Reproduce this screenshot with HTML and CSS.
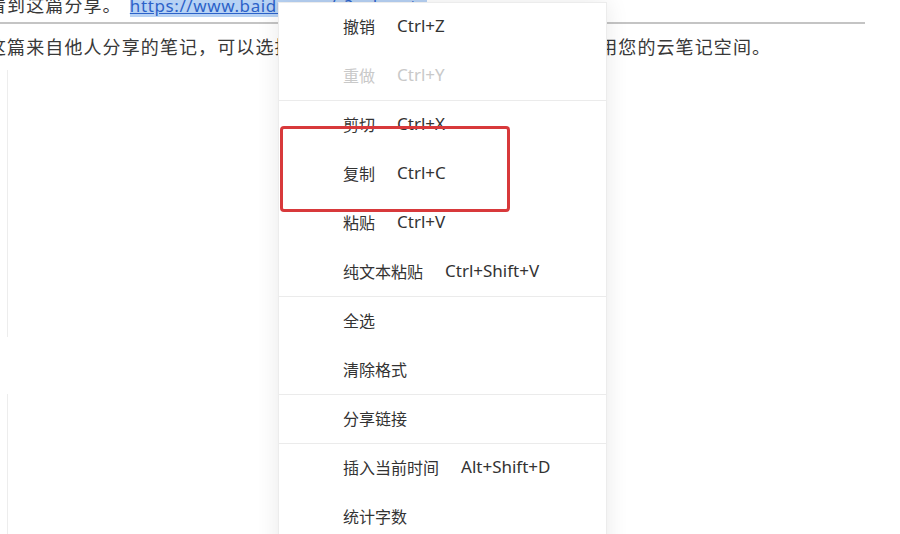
FILE: index.html
```html
<!DOCTYPE html>
<html lang="zh-CN">
<head>
<meta charset="utf-8">
<title>Context menu</title>
<link rel="stylesheet" href="styles.css">
</head>
<body>
<div class="doc">
  <p class="line line-top">看到这篇分享。 <a class="link" href="#">https://www.baidu.com/s?wd=note</a></p>
  <div class="rule"></div>
  <p class="line line-note">这篇来自他人分享的笔记，可以选择保存到自己的笔记本中，保存后将占用您的云笔记空间。</p>
  <div class="frame frame-a"></div>
  <div class="frame frame-b"></div>
</div>

<div class="menu">
  <div class="group">
    <div class="item"><span class="label">撤销</span><span class="key">Ctrl+Z</span></div>
    <div class="item disabled"><span class="label">重做</span><span class="key">Ctrl+Y</span></div>
  </div>
  <div class="group">
    <div class="item"><span class="label">剪切</span><span class="key">Ctrl+X</span></div>
    <div class="item"><span class="label">复制</span><span class="key">Ctrl+C</span></div>
    <div class="item"><span class="label">粘贴</span><span class="key">Ctrl+V</span></div>
    <div class="item"><span class="label">纯文本粘贴</span><span class="key">Ctrl+Shift+V</span></div>
  </div>
  <div class="group">
    <div class="item"><span class="label">全选</span></div>
    <div class="item"><span class="label">清除格式</span></div>
  </div>
  <div class="group">
    <div class="item"><span class="label">分享链接</span></div>
  </div>
  <div class="group">
    <div class="item"><span class="label">插入当前时间</span><span class="key">Alt+Shift+D</span></div>
    <div class="item"><span class="label">统计字数</span></div>
  </div>
</div>

<div class="highlight"></div>
</body>
</html>
```

FILE: styles.css
```css
html, body {
  margin: 0;
  padding: 0;
  background: #ffffff;
  overflow: hidden;
  width: 900px;
  height: 534px;
}

body {
  font-family: "Noto Sans", "Noto Sans CJK SC", sans-serif;
  color: #333333;
  position: relative;
}

.doc {
  margin-left: -12px;
  width: 877px;
}

.line {
  margin: 0;
  font-size: 18px;
  line-height: 22px;
  letter-spacing: 1.1px;
  white-space: nowrap;
  font-family: "Noto Sans CJK SC", sans-serif;
  color: #383838;
}

.line-top {
  margin-top: -7px;
}

.link {
  margin-left: 3px;
  color: #2c62c9;
  text-decoration: underline;
  letter-spacing: 0.6px;
  font-size: 17px;
  font-family: "Noto Sans", sans-serif;
  background: #b7d2f4;
}

.rule {
  margin-top: 5px;
  height: 2px;
  background: #c4c4c4;
}

.line-note {
  margin-top: 11px;
}

.frame {
  margin-left: 19px;
  border-left: 1px solid #ededed;
}

.frame-a {
  margin-top: 13px;
  height: 267px;
}

.frame-b {
  margin-top: 57px;
  height: 200px;
}

.menu {
  position: absolute;
  left: 278px;
  top: 2px;
  width: 329px;
  height: 560px;
  background: #ffffff;
  border: 1px solid #ececec;
  box-sizing: border-box;
  box-shadow: 0 0 22px rgba(0, 0, 0, 0.09);
}

.group + .group {
  border-top: 1px solid #ebebeb;
  margin-top: -1px;
}

.item {
  height: 49px;
  box-sizing: border-box;
  padding-bottom: 4px;
  display: flex;
  align-items: center;
  gap: 22px;
  padding-left: 64px;
  color: #333333;
}

.label {
  font-family: "Noto Sans CJK SC", sans-serif;
  font-size: 16px;
  line-height: 20px;
}

.key {
  font-family: "Noto Sans", sans-serif;
  font-size: 17px;
  line-height: 20px;
}

.item.disabled {
  color: #c9c9c9;
}

.highlight {
  position: absolute;
  left: 280px;
  top: 126px;
  width: 230px;
  height: 86px;
  box-sizing: border-box;
  border: 3px solid #d8393b;
  border-radius: 4px;
}
```
